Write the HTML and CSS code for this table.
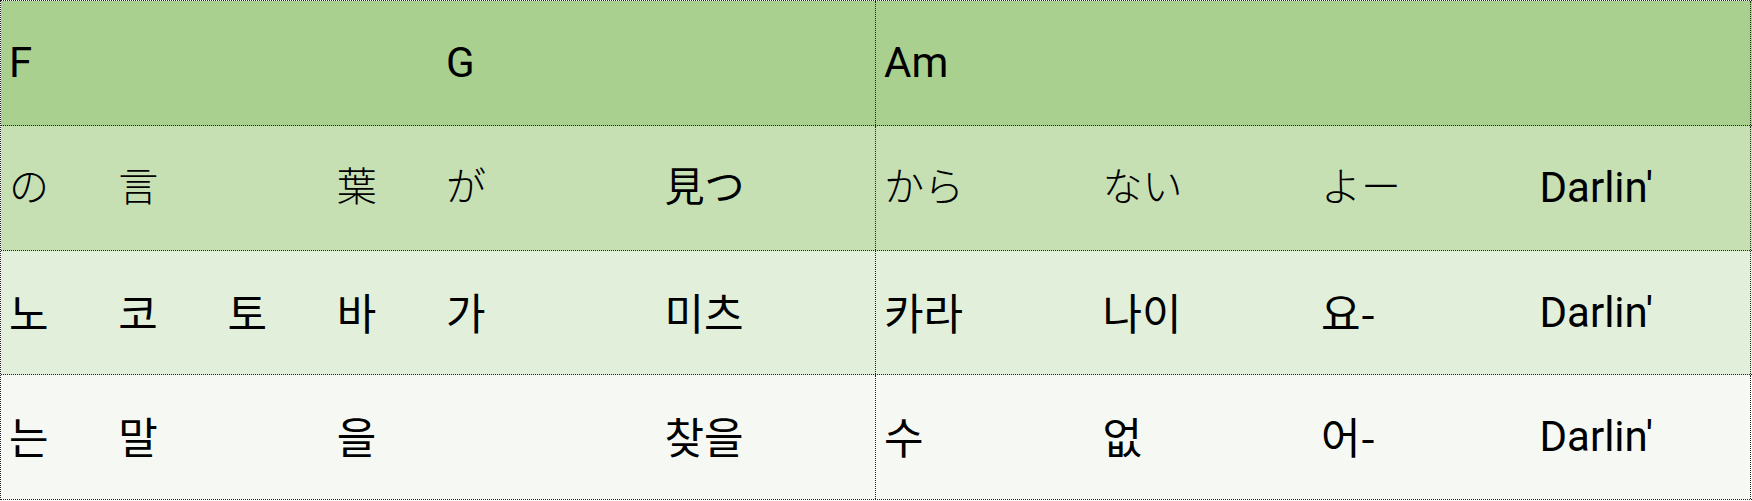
FILE: index.html
```html
<!DOCTYPE html>
<html lang="ja">
<head>
<meta charset="utf-8">
<title>Chord sheet</title>
<link rel="stylesheet" href="styles.css">
</head>
<body>
<div class="sheet">
  <div class="row r1">
    <div class="half">
      <div class="cell lat">F</div><div class="cell"></div><div class="cell"></div><div class="cell"></div>
      <div class="cell lat">G</div><div class="cell"></div><div class="cell"></div><div class="cell"></div>
    </div>
    <div class="half">
      <div class="cell lat">Am</div><div class="cell"></div><div class="cell"></div><div class="cell"></div>
      <div class="cell"></div><div class="cell"></div><div class="cell"></div><div class="cell"></div>
    </div>
  </div>
  <div class="row r2">
    <div class="half">
      <div class="cell ja">の</div><div class="cell ja">言</div><div class="cell"></div><div class="cell ja">葉</div>
      <div class="cell ja">が</div><div class="cell"></div><div class="cell ja strong">見つ</div><div class="cell"></div>
    </div>
    <div class="half">
      <div class="cell ja">から</div><div class="cell"></div><div class="cell ja">ない</div><div class="cell"></div>
      <div class="cell ja">よー</div><div class="cell"></div><div class="cell lat">Darlin'</div><div class="cell"></div>
    </div>
  </div>
  <div class="row r3">
    <div class="half">
      <div class="cell ko">노</div><div class="cell ko">코</div><div class="cell ko">토</div><div class="cell ko">바</div>
      <div class="cell ko">가</div><div class="cell"></div><div class="cell ko">미츠</div><div class="cell"></div>
    </div>
    <div class="half">
      <div class="cell ko">카라</div><div class="cell"></div><div class="cell ko">나이</div><div class="cell"></div>
      <div class="cell ko">요-</div><div class="cell"></div><div class="cell lat">Darlin'</div><div class="cell"></div>
    </div>
  </div>
  <div class="row r4">
    <div class="half">
      <div class="cell ko">는</div><div class="cell ko">말</div><div class="cell"></div><div class="cell ko">을</div>
      <div class="cell"></div><div class="cell"></div><div class="cell ko">찾을</div><div class="cell"></div>
    </div>
    <div class="half">
      <div class="cell ko">수</div><div class="cell"></div><div class="cell ko">없</div><div class="cell"></div>
      <div class="cell ko">어-</div><div class="cell"></div><div class="cell lat">Darlin'</div><div class="cell"></div>
    </div>
  </div>
</div>
</body>
</html>
```
FILE: styles.css
```css
html, body {
  margin: 0;
  padding: 0;
  background: #ffffff;
}

.sheet {
  width: 1751px;
  display: flex;
  flex-direction: column;
  border-top: 1px dotted #222;
  border-left: 1px dotted #222;
  color: #000;
}

.row {
  display: flex;
  border-bottom: 1px dotted #222;
}

.r1 { height: 124px; background: #a9d08e; }
.r2 { height: 124px; background: #c6e0b4; }
.r3 { height: 123px; background: #e2efda; }
.r4 { height: 124px; background: #f6f9f3; }

.half {
  width: 874px;
  display: grid;
  grid-template-columns: repeat(8, 1fr);
  border-right: 1px dotted #222;
}

.cell {
  display: flex;
  align-items: center;
  padding-left: 8px;
  white-space: nowrap;
  min-width: 0;
  line-height: 1;
}

.lat {
  font-family: Roboto, "Noto Sans", sans-serif;
  font-size: 42px;
}

.ja {
  font-family: "Noto Sans CJK JP", sans-serif;
  font-weight: 300;
  font-size: 40px;
  padding-bottom: 8px;
}

.ja.strong {
  font-weight: 400;
}

.ko {
  font-family: "Noto Sans CJK KR", sans-serif;
  font-size: 43px;
  padding-bottom: 3px;
}
```
